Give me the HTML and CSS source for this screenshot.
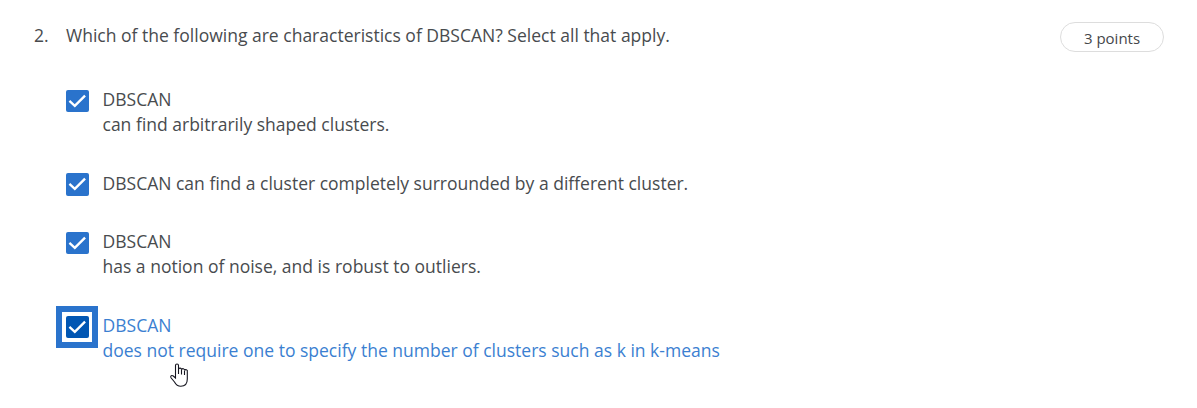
FILE: index.html
```html
<!DOCTYPE html>
<html lang="en">
<head>
<meta charset="utf-8">
<title>Quiz question</title>
<link rel="stylesheet" href="styles.css">
</head>
<body>
<main class="question">
  <header class="prompt">
    <span class="number">2.</span>
    <span class="text">Which of the following are characteristics of DBSCAN? Select all that apply.</span>
    <span class="points">3 points</span>
  </header>
  <div class="options">
    <div class="option"><span class="box"><svg viewBox="0 0 23 23"><path d="M3.500 11.200L9 16.200L19.500 5.700"/></svg></span><p>DBSCAN<br>can find arbitrarily shaped clusters.</p></div>
    <div class="option"><span class="box"><svg viewBox="0 0 23 23"><path d="M3.500 11.200L9 16.200L19.500 5.700"/></svg></span><p>DBSCAN can find a cluster completely surrounded by a different cluster.</p></div>
    <div class="option"><span class="box"><svg viewBox="0 0 23 23"><path d="M3.500 11.200L9 16.200L19.500 5.700"/></svg></span><p>DBSCAN<br>has a notion of noise, and is robust to outliers.</p></div>
    <div class="option active"><span class="box"><svg viewBox="0 0 23 23"><path d="M3.500 11.200L9 16.200L19.500 5.700"/></svg></span><p>DBSCAN<br>does not require one to specify the number of clusters such as k in k-means</p></div>
  </div>
  <svg class="cursor" viewBox="0 0 20 26"><path d="M6.500 14V3.500a1.500 1.500 0 0 1 3 0V7.500a1.500 1.500 0 0 1 3 .3 1.500 1.500 0 0 1 3 .8 1.400 1.400 0 0 1 2.800 1V17c0 4-2 7.300-6.500 7.300-3 0-5-1.800-6.300-4.300L2 15.800c-1-2 .8-3 2.300-1.800l2.200 2zM9.500 7.500V12M12.500 8V12.500M15.500 9V13"/></svg>
</main>
</body>
</html>
```
FILE: styles.css
```css
body { margin: 0; background: #fff; color: #484b4e; font: 400 17.520px/25px "Open Sans", sans-serif; }
.question { position: relative; box-sizing: border-box; width: 1197px; height: 408px; padding: 22px 33px 0 34px; overflow: hidden; }
.prompt { display: flex; height: 30px; }
.number { width: 32px; flex: none; padding-top: 1px; }
.text { flex: 1; padding-top: 1px; }
.points { box-sizing: border-box; width: 104px; height: 30px; border: 1px solid #ddd; border-radius: 15px; color: #45474a; font-size: 15px; line-height: 31px; text-align: center; }
.options { display: flex; flex-direction: column; gap: 33.600px; padding: 35px 0 0 32px; }
.option { display: flex; gap: 14px; }
.option p { margin: 0; }
.box { width: 22.500px; height: 22.500px; margin-top: 2.500px; flex: none; border-radius: 2px; background: #2a73cc; }
.box svg { display: block; width: 22.500px; height: 22.500px; fill: none; stroke: #fff; stroke-width: 2.400; }
.active { color: #3b7fd1; }
.active .box { position: relative; margin-top: 3px; background: #0156b3; }
.active .box::before { content: ""; position: absolute; inset: -10px -9.500px -9.500px -10px; border: 6px solid #2a73cc; }
.cursor { position: absolute; left: 169px; top: 362px; width: 20px; height: 26px; fill: #fff; stroke: #15151f; stroke-width: 1.100; }
```
